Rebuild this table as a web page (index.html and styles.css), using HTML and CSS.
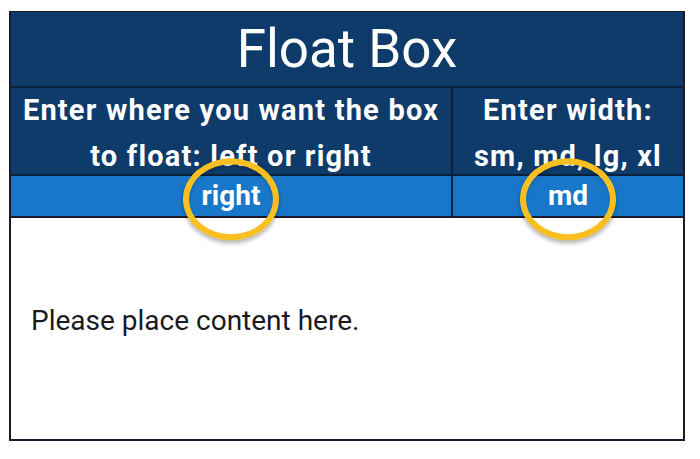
FILE: index.html
```html
<!DOCTYPE html>
<html>
<head>
<meta charset="utf-8">
<link rel="stylesheet" href="styles.css">
</head>
<body>
<div class="box">
  <div class="title">Float Box</div>
  <div class="grid">
    <div class="head head-left">Enter where you want the box<br>to float: left or right</div>
    <div class="head head-right">Enter width:<br>sm, md, lg, xl</div>
    <div class="val val-left"><span class="mark">right<span class="ring"></span></span></div>
    <div class="val val-right"><span class="mark">md<span class="ring"></span></span></div>
  </div>
  <div class="content">Please place content here.</div>
</div>
</body>
</html>
```

FILE: styles.css
```css
html, body {
  margin: 0;
  padding: 0;
  background: #ffffff;
}
body {
  font-family: Roboto, "Liberation Sans", sans-serif;
  padding: 11px 15px 0 9px;
}
.box {
  width: 676px;
  box-sizing: border-box;
  border: 2px solid #1c1a2c;
  border-top-width: 1px;
}
.title {
  height: 74px;
  background: #0f3b6b;
  color: #ffffff;
  font-size: 53px;
  line-height: 74px;
  text-align: center;
  border-bottom: 2px solid #0a1f3a;
}
.grid {
  display: grid;
  grid-template-columns: 442px 1fr;
}
.head {
  height: 88px;
  box-sizing: border-box;
  padding-top: 4px;
  background: #0f3b6b;
  color: #ffffff;
  font-weight: 700;
  font-size: 29px;
  letter-spacing: 1.2px;
  line-height: 46px;
  text-align: center;
  display: flex;
  align-items: center;
  justify-content: center;
  border-bottom: 2px solid #0a1f3a;
}
.head-left, .val-left {
  border-right: 2px solid #0a1f3a;
}
.val {
  height: 40px;
  background: #1877c8;
  color: #ffffff;
  font-weight: 700;
  font-size: 28px;
  display: flex;
  align-items: center;
  justify-content: center;
  border-bottom: 2px solid #1c1a2c;
}
.mark {
  position: relative;
  display: inline-block;
  line-height: 40px;
}
.ring {
  position: absolute;
  left: 50%;
  top: 50%;
  width: 84px;
  height: 70px;
  transform: translate(-50%, -46%);
  border: 6px solid #f9be20;
  border-radius: 50%;
  box-shadow: 0 3px 4px rgba(0, 0, 0, 0.3), inset 0 2px 3px rgba(0, 0, 0, 0.2);
  z-index: 2;
}
.content {
  height: 221px;
  box-sizing: border-box;
  padding: 0 20px 16px;
  display: flex;
  align-items: center;
  font-size: 28px;
  color: #1a1a22;
  background: #ffffff;
}
```
